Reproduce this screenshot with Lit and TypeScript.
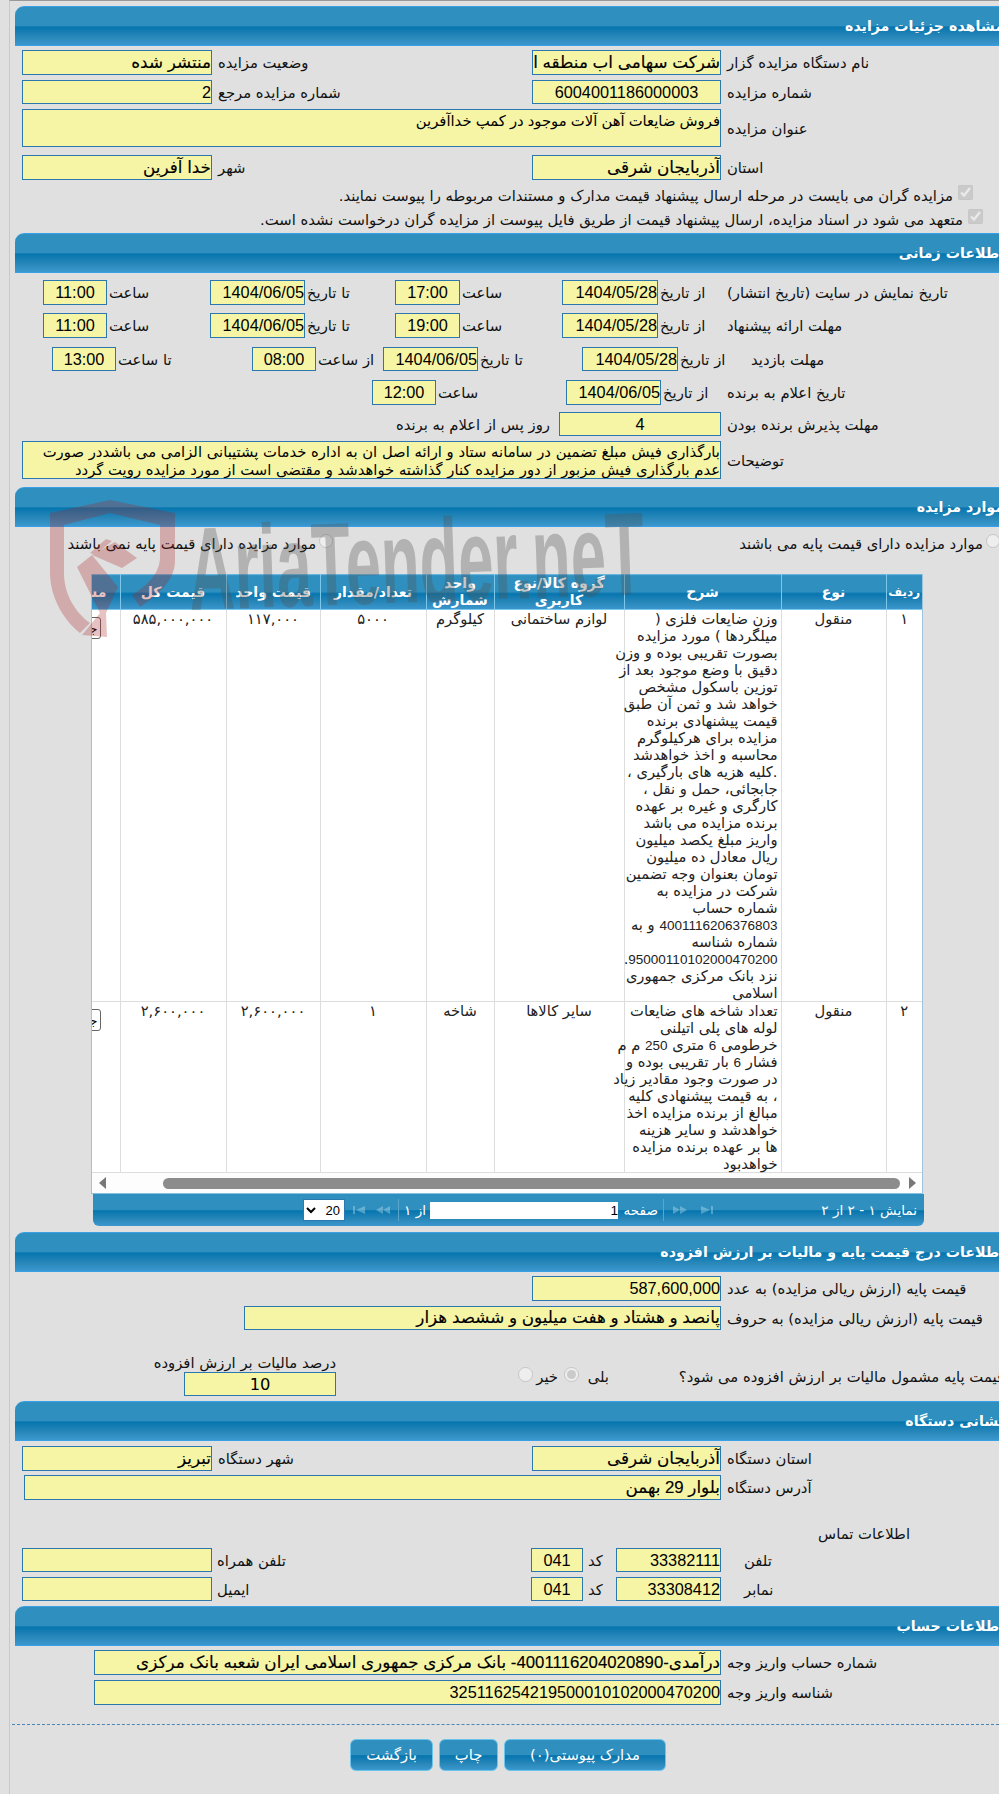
import {css, html, LitElement} from 'lit'
import {customElement} from 'lit/decorators.js'

const desc1 = [
  'وزن ضایعات فلزی (',
  'میلگردها ) مورد مزایده',
  'بصورت تقریبی بوده و وزن',
  'دقیق با وضع موجود بعد از',
  'توزین باسکول مشخص',
  'خواهد شد و ثمن آن طبق',
  'قیمت پیشنهادی برنده',
  'مزایده برای هرکیلوگرم',
  'محاسبه و اخذ خواهدشد',
  '.کلیه هزیه های بارگیری ،',
  'جابجائی، حمل و نقل ،',
  'کارگری و غیره بر عهده',
  'برنده مزایده می باشد',
  'واریز مبلغ یکصد میلیون',
  'ریال معادل ده میلیون',
  'تومان بعنوان وجه تضمین',
  'شرکت در مزایده به',
  'شماره حساب',
  '4001116206376803 و به',
  'شماره شناسه',
  '95000110102000470200.',
  'نزد بانک مرکزی جمهوری',
  'اسلامی',
]

const desc2 = [
  'تعداد شاخه های ضایعات',
  'لوله های پلی اتیلنی',
  'خرطومی 6 متری 250 م م',
  'فشار 6 بار تقریبی بوده و',
  'در صورت وجود مقادیر زیاد',
  '، به قیمت پیشنهادی کلیه',
  'مبالغ از برنده مزایده اخذ',
  'خواهدشد و سایر هزینه',
  'ها بر عهده برنده مزایده',
  'خواهدبود',
]

const rows = [
  {no: '۱', kind: 'منقول', lines: desc1, group: 'لوازم ساختمانی', unit: 'کیلوگرم', qty: '۵۰۰۰', price: '۱۱۷,۰۰۰', total: '۵۸۵,۰۰۰,۰۰۰'},
  {no: '۲', kind: 'منقول', lines: desc2, group: 'سایر کالاها', unit: 'شاخه', qty: '۱', price: '۲,۶۰۰,۰۰۰', total: '۲,۶۰۰,۰۰۰'},
]

@customElement('app-root')
export class AppRoot extends LitElement {
  static styles = css`
    :host {
      background: #e0e0e0;
      color: #111;
      display: block;
      font-family: "Liberation Sans", "DejaVu Sans", sans-serif;
      font-size: 14.8px;
      height: 1794px;
      overflow: hidden;
      position: relative;
      width: 999px;
    }

    .page {
      border-left: 1px solid #c8c8c8;
      border-top: 1px solid #999;
      box-sizing: border-box;
      direction: rtl;
      height: 1794px;
      margin-left: 9px;
      padding: 5px 0 0 5px;
      width: 990px;
    }

    .head {
      background: linear-gradient(#2f90bf 0, #2f90bf 50%, #0575ae 52%, #2a88ba 80%, #3a98cf 100%);
      border-bottom: 1px solid #3aa0e6;
      border-top: 1px solid #3aa0e6;
      border-top-left-radius: 9px;
      box-sizing: border-box;
      color: #fff;
      font-family: "DejaVu Sans", sans-serif;
      font-size: 14.2px;
      font-weight: bold;
      height: 40px;
      line-height: 38px;
    }

    .head span {
      margin-right: -5px;
    }

    .row {
      align-items: center;
      display: grid;
    }

    .field {
      background: #f6f5a5;
      border: 1px solid #2a78ae;
      box-sizing: border-box;
      color: #000;
      font-size: 16.3px;
      height: 25px;
      line-height: 23px;
      overflow: hidden;
      white-space: nowrap;
    }

    .field.h24 {
      height: 24px;
      line-height: 22px;
    }

    .field.fa {
      font-size: 16.8px;
      -webkit-text-stroke: 0.15px #000;
    }

    .field.center {
      text-align: center;
    }

    .field.title {
      font-size: 14.8px;
      height: 38px;
      line-height: 22px;
      white-space: normal;
    }

    .field.desc {
      font-family: "DejaVu Sans", sans-serif;
      font-size: 14.8px;
      height: 38px;
      line-height: 18px;
      padding-top: 1px;
    }

    .lbl {
      font-family: "DejaVu Sans", sans-serif;
      text-align: left;
      white-space: nowrap;
    }

    .pad {
      padding-left: 6px;
    }

    .pad2 {
      padding-left: 2px;
    }

    /* section 1 */
    .two {
      grid-template-columns: 278px 189px 320px 190px;
    }

    .wide {
      grid-template-columns: 278px 699px;
    }

    .addr {
      grid-template-columns: 278px 697px;
    }

    .mt4 { margin-top: 4px; }
    .mt5 { margin-top: 5px; }
    .mt6 { margin-top: 6px; }
    .mt7 { margin-top: 7px; }
    .mt8 { margin-top: 8px; }
    .mt9 { margin-top: 9px; }

    .check {
      align-items: center;
      display: flex;
      font-family: "DejaVu Sans", sans-serif;
      height: 24px;
      white-space: nowrap;
    }

    .check input {
      height: 15px;
      margin: -6px 0 0 5px;
      width: 15px;
    }

    .ck1 {
      margin-right: 26px;
      margin-top: 3px;
    }

    .ck2 {
      margin-bottom: 2px;
      margin-right: 16px;
    }

    /* time section */
    .t1 {
      grid-template-columns: 272px 69px 96px 102px 65px 90px 95px 103px 64px;
    }

    .t2 {
      grid-template-columns: 248px 73px 96px 104px 95px 67px 64px 136px 64px;
    }

    .t3 {
      grid-template-columns: 272px 66px 95px 130px 64px;
    }

    .t4 {
      grid-template-columns: 278px 162px auto;
    }

    .t4 .after {
      padding-right: 9px;
      text-align: right;
    }

    /* items */
    .radios {
      align-items: center;
      display: flex;
      font-family: "DejaVu Sans", sans-serif;
      height: 30px;
      margin-top: 1px;
      white-space: nowrap;
    }

    .radios input {
      flex: none;
      height: 14px;
      margin: -5px 0 0 3px;
      width: 14px;
    }

    .radios .rd-a {
      margin-right: -1px;
    }

    .radios .rd-b {
      margin-right: 406px;
    }

    .grid-wrap {
      border-left: 1px solid #9cc4dc;
      border-right: 1px solid #9cc4dc;
      box-sizing: border-box;
      margin-right: 76px;
      margin-top: 16px;
      overflow: hidden;
      width: 832px;
    }

    table {
      background: #fff;
      border-collapse: collapse;
      color: #222;
      font-family: "DejaVu Sans", sans-serif;
      font-size: 14.7px;
      line-height: 17px;
      table-layout: fixed;
      width: 830px;
    }

    .c1 { width: 36px; }
    .c2 { width: 105px; }
    .c3 { width: 157px; }
    .c4 { width: 130px; }
    .c5 { width: 68px; }
    .c6 { width: 106px; }
    .c7 { width: 94px; }
    .c8 { width: 106px; }
    .c9 { width: 28px; }

    th {
      background: linear-gradient(#2f90bf 0, #2f90bf 50%, #0575ae 52%, #2a88ba 80%, #3a98cf 100%);
      border-left: 1px solid #7cc8ec;
      border-bottom: 1px solid #7cc8ec;
      border-top: 1px solid #6ab4dc;
      color: #fff;
      font-size: 14px;
      font-weight: bold;
      height: 34px;
      line-height: 17px;
      overflow: hidden;
      padding: 0;
      text-align: center;
    }

    th.small {
      font-size: 12px;
    }

    th.clip {
      border-left: 0;
      padding-right: 13px;
      text-align: right;
      white-space: nowrap;
    }

    td {
      border-bottom: 1px solid #ddd;
      border-left: 1px solid #ddd;
      overflow: hidden;
      padding: 0;
      text-align: center;
      vertical-align: top;
      white-space: nowrap;
    }

    td.txt {
      overflow: visible;
      padding-right: 3px;
      text-align: right;
    }

    td.txt .dig {
      font-family: "Liberation Sans", sans-serif;
      font-size: 13.5px;
      line-height: 0;
    }

    td.clip {
      border-left: 0;
      text-align: right;
    }

    td.clip button {
      background: #fff;
      border: 1px solid #666;
      border-radius: 3px;
      box-sizing: border-box;
      display: block;
      font: 13px "DejaVu Sans", sans-serif;
      height: 22px;
      margin: 7px 19px 0 0;
      padding: 0 2px;
      text-align: right;
      width: 60px;
    }

    .scroll {
      align-items: center;
      background: #fdfdfd;
      border-bottom: 1px solid #86c2e0;
      display: flex;
      height: 20px;
    }

    .arrow {
      flex: none;
      height: 12px;
      width: 7px;
    }

    .arrow.r {
      margin-right: 6px;
    }

    .thumb {
      background: #8c8c8c;
      border-radius: 6px;
      flex: none;
      height: 11px;
      margin: 0 9px;
      width: 737px;
    }

    .arrow.l {
      margin-right: 48px;
    }

    .pager {
      align-items: center;
      background: linear-gradient(#2f90bf 0, #2f90bf 50%, #0575ae 52%, #2a88ba 80%, #3a98cf 100%);
      border-bottom-left-radius: 6px;
      border-bottom-right-radius: 6px;
      color: #fff;
      display: flex;
      font-family: "DejaVu Sans", sans-serif;
      font-size: 13.6px;
      height: 32px;
      margin-right: 75px;
      white-space: nowrap;
      width: 831px;
    }

    .pg-info {
      box-sizing: border-box;
      flex: none;
      padding-right: 7px;
      width: 211px;
    }

    .pg-ico {
      flex: none;
      height: 10px;
      opacity: 0.35;
    }

    .i12 { width: 12px; }
    .i14 { width: 15px; }

    .ml13 { margin-left: 13px; }
    .ml10 { margin-left: 10px; }
    .ml9 { margin-left: 9px; }
    .ml8 { margin-left: 8px; }
    .ml6 { margin-left: 6px; }
    .ml5 { margin-left: 5px; }
    .ml4 { margin-left: 4px; }

    .sep {
      background: #5aa5cb;
      flex: none;
      height: 22px;
      width: 1px;
    }

    .pg-lab {
      flex: none;
      width: 34px;
    }

    .pg-of {
      flex: none;
      width: 21px;
    }

    .pg-in {
      background: #fff;
      color: #000;
      flex: none;
      font-family: "Liberation Sans", sans-serif;
      height: 17px;
      line-height: 17px;
      width: 188px;
    }

    select {
      background: #fff;
      border: 1px solid #2a78ae;
      border-radius: 0;
      box-sizing: border-box;
      flex: none;
      font: 13px "Liberation Sans", sans-serif;
      height: 22px;
      width: 42px;
    }

    /* price section */
    .p1 {
      grid-template-columns: 278px 189px;
    }

    .p2 {
      grid-template-columns: 278px 477px;
    }

    .vat {
      align-items: flex-start;
      display: flex;
      font-family: "DejaVu Sans", sans-serif;
      height: 65px;
      white-space: nowrap;
    }

    .vat-q {
      flex: none;
      margin-right: -5px;
      margin-top: 38px;
      width: 395px;
    }

    .vat-yes {
      flex: none;
      margin-top: 38px;
      width: 24px;
    }

    .vat-no {
      flex: none;
      margin-right: 6px;
      margin-top: 38px;
      width: 19px;
    }

    .vat input {
      flex: none;
      height: 15px;
      margin: 37px 6px 0 0;
      width: 15px;
    }

    .vat-box {
      display: flex;
      flex-direction: column;
      margin-right: 182px;
      margin-top: 24px;
    }

    .vat-box .cap {
      line-height: 18px;
    }

    .vat-box .field {
      height: 24px;
      width: 152px;
    }

    .contact {
      font-family: "DejaVu Sans", sans-serif;
      line-height: 17px;
      margin-right: 89px;
      margin-top: 25px;
    }

    .ph {
      grid-template-columns: 255px 23px 105px 33px 52px 319px 190px;
    }

    .ph .kod {
      padding-left: 5px;
    }

    .ph .field {
      height: 24px;
      line-height: 22px;
    }

    .bank1 {
      grid-template-columns: 278px 627px;
    }

    .rule {
      border-top: 1px dashed #4a86b8;
      margin-left: -3px;
      margin-top: 19px;
    }

    .actions {
      display: flex;
      gap: 6px;
      margin-right: 333px;
      margin-top: 14px;
    }

    .btn {
      background: linear-gradient(#2f90bf 0, #2f90bf 50%, #0575ae 52%, #2a88ba 80%, #3a98cf 100%);
      border: 1px solid #6cc3ec;
      border-radius: 6px;
      box-sizing: border-box;
      color: #fff;
      font-family: "DejaVu Sans", sans-serif;
      height: 32px;
      line-height: 30px;
      text-align: center;
    }

    .b1 { width: 162px; }
    .b2 { width: 59px; }
    .b3 { width: 83px; }

    .mark {
      height: 150px;
      left: 40px;
      pointer-events: none;
      position: absolute;
      top: 495px;
      width: 640px;
    }

    .mark path {
      fill: rgba(170, 30, 30, 0.27);
    }

    .mark text {
      fill: rgba(80, 80, 80, 0.32);
      font-family: "Liberation Sans", sans-serif;
      font-size: 118px;
      font-weight: bold;
    }
  `

  // latin digits inside the persian description are smaller than the rest
  renderLine(line: string) {
    return line.split(/(\d+)/).map((part) => (/^\d+$/.test(part) ? html`<span class="dig">${part}</span>` : part))
  }

  renderRow(r: (typeof rows)[number]) {
    return html`
      <tr>
        <td>${r.no}</td>
        <td>${r.kind}</td>
        <td class="txt">${r.lines.map((l) => html`${this.renderLine(l)}<br>`)}</td>
        <td>${r.group}</td>
        <td>${r.unit}</td>
        <td>${r.qty}</td>
        <td>${r.price}</td>
        <td>${r.total}</td>
        <td class="clip"><button>جزئیات</button></td>
      </tr>`
  }

  render() {
    return html`
      <div class="page">
        <div class="head"><span>مشاهده جزئیات مزایده</span></div>
        <div class="row two mt4">
          <div class="lbl pad">نام دستگاه مزایده گزار</div>
          <div class="field fa">شرکت سهامی اب منطقه ای آذربایجان شرقی</div>
          <div class="lbl pad">وضعیت مزایده</div>
          <div class="field fa">منتشر شده</div>
        </div>
        <div class="row two mt5">
          <div class="lbl pad">شماره مزایده</div>
          <div class="field center h24">6004001186000003</div>
          <div class="lbl pad">شماره مزایده مرجع</div>
          <div class="field h24">2</div>
        </div>
        <div class="row wide mt5">
          <div class="lbl pad">عنوان مزایده</div>
          <div class="field title">فروش ضایعات آهن آلات موجود در کمپ خداآفرین</div>
        </div>
        <div class="row two mt8">
          <div class="lbl pad">استان</div>
          <div class="field fa">آذربایجان شرقی</div>
          <div class="lbl pad">شهر</div>
          <div class="field fa">خدا آفرین</div>
        </div>
        <div class="check ck1">
          <input type="checkbox" checked disabled>
          مزایده گران می بایست در مرحله ارسال پیشنهاد قیمت مدارک و مستندات مربوطه را پیوست نمایند.
        </div>
        <div class="check ck2">
          <input type="checkbox" checked disabled>
          متعهد می شود در اسناد مزایده، ارسال پیشنهاد قیمت از طریق فایل پیوست از مزایده گران درخواست نشده است.
        </div>

        <div class="head"><span>اطلاعات زمانی</span></div>
        <div class="row t1 mt7">
          <div class="lbl">تاریخ نمایش در سایت (تاریخ انتشار)</div>
          <div class="lbl pad2">از تاریخ</div>
          <div class="field">1404/05/28</div>
          <div class="lbl pad2">ساعت</div>
          <div class="field center">17:00</div>
          <div class="lbl pad2">تا تاریخ</div>
          <div class="field">1404/06/05</div>
          <div class="lbl pad2">ساعت</div>
          <div class="field center">11:00</div>
        </div>
        <div class="row t1 mt8">
          <div class="lbl">مهلت ارائه پیشنهاد</div>
          <div class="lbl pad2">از تاریخ</div>
          <div class="field">1404/05/28</div>
          <div class="lbl pad2">ساعت</div>
          <div class="field center">19:00</div>
          <div class="lbl pad2">تا تاریخ</div>
          <div class="field">1404/06/05</div>
          <div class="lbl pad2">ساعت</div>
          <div class="field center">11:00</div>
        </div>
        <div class="row t2 mt9">
          <div class="lbl">مهلت بازدید</div>
          <div class="lbl pad2">از تاریخ</div>
          <div class="field h24">1404/05/28</div>
          <div class="lbl pad2">تا تاریخ</div>
          <div class="field h24">1404/06/05</div>
          <div class="lbl pad2">از ساعت</div>
          <div class="field center h24">08:00</div>
          <div class="lbl pad2">تا ساعت</div>
          <div class="field center h24">13:00</div>
        </div>
        <div class="row t3 mt9">
          <div class="lbl">تاریخ اعلام به برنده</div>
          <div class="lbl pad2">از تاریخ</div>
          <div class="field">1404/06/05</div>
          <div class="lbl pad2">ساعت</div>
          <div class="field center">12:00</div>
        </div>
        <div class="row t4 mt7">
          <div class="lbl pad">مهلت پذیرش برنده بودن</div>
          <div class="field center h24">4</div>
          <div class="lbl after">روز پس از اعلام به برنده</div>
        </div>
        <div class="row wide mt5">
          <div class="lbl pad">توضیحات</div>
          <div class="field desc">بارگذاری فیش مبلغ تضمین در سامانه ستاد و ارائه اصل ان به اداره خدمات پشتیبانی الزامی می باشددر صورت<br>عدم بارگذاری فیش مزبور از دور مزایده کنار گذاشته خواهدشد و مقتضی است از مورد مزایده رویت گردد</div>
        </div>

        <div class="head mt8"><span>موارد مزایده</span></div>
        <div class="radios">
          <input class="rd-a" type="radio" disabled>
          <span>موارد مزایده دارای قیمت پایه می باشند</span>
          <input class="rd-b" type="radio" disabled>
          <span>موارد مزایده دارای قیمت پایه نمی باشند</span>
        </div>
        <div class="grid-wrap">
          <table>
            <colgroup>
              <col class="c1"><col class="c2"><col class="c3"><col class="c4"><col class="c5">
              <col class="c6"><col class="c7"><col class="c8"><col class="c9">
            </colgroup>
            <tr>
              <th class="small">ردیف</th>
              <th>نوع</th>
              <th>شرح</th>
              <th>گروه کالا/نوع<br>کاربری</th>
              <th>واحد<br>شمارش</th>
              <th>تعداد/مقدار</th>
              <th>قیمت واحد</th>
              <th>قیمت کل</th>
              <th class="clip">مشاهده</th>
            </tr>
            ${rows.map((r) => this.renderRow(r))}
          </table>
          <div class="scroll">
            <svg class="arrow r" viewBox="0 0 7 12"><path d="M0 0L7 6L0 12Z" fill="#777"/></svg>
            <div class="thumb"></div>
            <svg class="arrow l" viewBox="0 0 7 12"><path d="M7 0L0 6L7 12Z" fill="#777"/></svg>
          </div>
        </div>
        <div class="pager">
          <div class="pg-info">نمایش ۱ - ۲ از ۲</div>
          <svg class="pg-ico i12 ml13" viewBox="0 0 12 10"><path d="M0 1L9 5L0 9ZM10 1H12V9H10Z" fill="#cfeaf8"/></svg>
          <svg class="pg-ico i14 ml9" viewBox="0 0 15 10"><path d="M0 1L7 5L0 9ZM7 1L14 5L7 9Z" fill="#cfeaf8"/></svg>
          <div class="sep ml5"></div>
          <div class="pg-lab ml6">صفحه</div>
          <div class="pg-in ml4">1</div>
          <div class="pg-of ml6">از ۱</div>
          <div class="sep ml8"></div>
          <svg class="pg-ico i14 ml10" viewBox="0 0 15 10"><path d="M15 1L8 5L15 9ZM8 1L1 5L8 9Z" fill="#cfeaf8"/></svg>
          <svg class="pg-ico i12 ml8" viewBox="0 0 12 10"><path d="M12 1L3 5L12 9ZM0 1H2V9H0Z" fill="#cfeaf8"/></svg>
          <select><option>20</option></select>
        </div>

        <div class="head mt6"><span>اطلاعات درج قیمت پایه و مالیات بر ارزش افزوده</span></div>
        <div class="row p1 mt4">
          <div class="lbl pad">قیمت پایه (ارزش ریالی مزایده) به عدد</div>
          <div class="field">587,600,000</div>
        </div>
        <div class="row p2 mt5">
          <div class="lbl pad">قیمت پایه (ارزش ریالی مزایده) به حروف</div>
          <div class="field fa h24">پانصد و هشتاد و هفت میلیون و ششصد هزار</div>
        </div>
        <div class="vat">
          <div class="vat-q">قیمت پایه مشمول مالیات بر ارزش افزوده می شود؟</div>
          <span class="vat-yes">بلی</span>
          <input type="radio" checked disabled>
          <span class="vat-no">خیر</span>
          <input type="radio" disabled>
          <div class="vat-box">
            <div class="cap">درصد مالیات بر ارزش افزوده</div>
            <div class="field center">10</div>
          </div>
        </div>

        <div class="head mt6"><span>نشانی دستگاه</span></div>
        <div class="row two mt5">
          <div class="lbl pad">استان دستگاه</div>
          <div class="field fa">آذربایجان شرقی</div>
          <div class="lbl pad">شهر دستگاه</div>
          <div class="field fa">تبریز</div>
        </div>
        <div class="row addr mt4">
          <div class="lbl pad">آدرس دستگاه</div>
          <div class="field fa">بلوار 29 بهمن</div>
        </div>
        <div class="contact">اطلاعات تماس</div>
        <div class="row ph mt6">
          <div class="lbl">تلفن</div>
          <div></div>
          <div class="field">33382111</div>
          <div class="lbl kod">کد</div>
          <div class="field center">041</div>
          <div class="lbl kod">تلفن همراه</div>
          <div class="field"></div>
        </div>
        <div class="row ph mt5">
          <div class="lbl">نمابر</div>
          <div></div>
          <div class="field">33308412</div>
          <div class="lbl kod">کد</div>
          <div class="field center">041</div>
          <div class="lbl kod">ایمیل</div>
          <div class="field"></div>
        </div>

        <div class="head mt5"><span>اطلاعات حساب</span></div>
        <div class="row bank1 mt4">
          <div class="lbl pad">شماره حساب واریز وجه</div>
          <div class="field fa">درآمدی-4001116204020890- بانک مرکزی جمهوری اسلامی ایران شعبه بانک مرکزی</div>
        </div>
        <div class="row bank1 mt5">
          <div class="lbl pad">شناسه واریز وجه</div>
          <div class="field">325116254219500010102000470200</div>
        </div>
        <div class="rule"></div>
        <div class="actions">
          <div class="btn b1">مدارک پیوستی(۰)</div>
          <div class="btn b2">چاپ</div>
          <div class="btn b3">بازگشت</div>
        </div>
      </div>

      <svg class="mark" viewBox="0 0 640 150">
        <path d="M10 18L70 5L135 18V66C135 85 118 100 100 112L92 100C108 90 120 78 120 62V30L70 18L24 30V78C24 100 36 118 50 128L40 138C22 124 10 100 10 78Z"/>
        <path d="M37 72L52 60L78 92L66 118L67 142L42 140L60 118Z"/>
        <path d="M52 60L75 47L97 63L82 73ZM50 58L66 44L72 46L55 60Z"/>
        <text x="150" y="115" textLength="456" lengthAdjust="spacingAndGlyphs" transform="rotate(-2 150 115)">AriaTender.neT</text>
      </svg>`
  }
}
